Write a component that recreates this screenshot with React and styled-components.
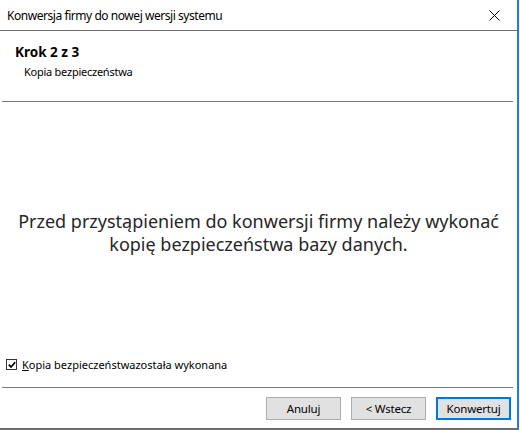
import React, { useState } from "react";
import styled, { createGlobalStyle } from "styled-components";

const GlobalStyle = createGlobalStyle`
  html, body {
    margin: 0;
    padding: 0;
    background: #fff;
  }
  body {
    font-family: "Noto Sans", "Segoe UI", sans-serif;
    font-size: 12px;
    color: #000;
  }
`;

const Window = styled.div`
  width: 517px;
  height: 428px;
  background: #fff;
  border-right: 2px solid #1883d7;
  border-bottom: 2px solid #6d6d6d;
  display: flex;
  flex-direction: column;
  box-sizing: content-box;
`;

const TitleBar = styled.div`
  height: 30px;
  display: flex;
  align-items: center;
  justify-content: space-between;
  padding: 0 0 0 7px;
  border-bottom: 1px solid #6d6d6d;
  flex-shrink: 0;
`;

const Title = styled.span`
  font-size: 12px;
  letter-spacing: -0.45px;
`;

const CloseButton = styled.button`
  width: 46px;
  height: 30px;
  border: none;
  background: transparent;
  display: flex;
  align-items: center;
  justify-content: center;
  padding: 0;
`;

const Separator = styled.div`
  height: 1px;
  margin: 0 4px 0 2px;
  background: #7a7a7a;
  flex-shrink: 0;
`;

const Header = styled.div`
  height: 70px;
  padding: 12px 0 0 15px;
  box-sizing: border-box;
  flex-shrink: 0;
`;

const StepTitle = styled.div`
  font-weight: 700;
  font-size: 13.5px;
  line-height: 18px;
`;

const StepSubtitle = styled.div`
  font-size: 11px;
  line-height: 15px;
  margin: 3px 0 0 9px;
  letter-spacing: -0.25px;
`;

const Body = styled.div`
  flex: 1;
  display: flex;
  flex-direction: column;
`;

const Message = styled.div`
  flex: 1;
  display: flex;
  align-items: center;
  justify-content: center;
  text-align: center;
  font-size: 18px;
  line-height: 23px;
  color: #262626;
  padding-top: 6px;
`;

const CheckRow = styled.label`
  display: flex;
  align-items: center;
  gap: 5px;
  padding: 0 0 15px 6px;
  font-size: 11px;
  cursor: default;
`;

const CheckBox = styled.span`
  width: 9px;
  height: 9px;
  border: 1px solid #333;
  background: #fff;
  display: flex;
  align-items: center;
  justify-content: center;
  box-sizing: content-box;
`;

const Mnemonic = styled.span`
  text-decoration: underline;
`;

const Footer = styled.div`
  height: 40px;
  display: flex;
  align-items: center;
  justify-content: flex-end;
  gap: 10px;
  padding: 0 6px 0 0;
  flex-shrink: 0;
`;

const Button = styled.button`
  width: 75px;
  height: 23px;
  font-family: "Noto Sans", "Segoe UI", sans-serif;
  font-size: 11.5px;
  letter-spacing: -0.2px;
  color: #000;
  background: #e1e1e1;
  border: 1px solid ${({ $primary }) => ($primary ? "#0078d7" : "#adadad")};
  box-shadow: ${({ $primary }) => ($primary ? "inset 0 0 0 1px #0078d7" : "none")};
  padding: 0;
  border-radius: 0;
`;

export default function App() {
  const [done, setDone] = useState(true);

  return (
    <>
      <GlobalStyle />
      <Window>
        <TitleBar>
          <Title>Konwersja firmy do nowej wersji systemu</Title>
          <CloseButton aria-label="Zamknij">
            <svg width="11" height="11" viewBox="0 0 11 11">
              <path d="M0.5 0.5 L10.5 10.5 M10.5 0.5 L0.5 10.5" stroke="#000" strokeWidth="1" />
            </svg>
          </CloseButton>
        </TitleBar>
        <Header>
          <StepTitle>Krok 2 z 3</StepTitle>
          <StepSubtitle>Kopia bezpieczeństwa</StepSubtitle>
        </Header>
        <Separator />
        <Body>
          <Message>
            Przed przystąpieniem do konwersji firmy należy wykonać
            <br />
            kopię bezpieczeństwa bazy danych.
          </Message>
          <CheckRow onClick={() => setDone(!done)}>
            <CheckBox>
              {done && (
                <svg width="8" height="8" viewBox="0 0 8 8">
                  <path d="M0.8 3.6 L3 6 L7.2 1.2" stroke="#000" strokeWidth="1.7" fill="none" />
                </svg>
              )}
            </CheckBox>
            <span>
              <Mnemonic>K</Mnemonic>opia bezpieczeństwazostała wykonana
            </span>
          </CheckRow>
        </Body>
        <Separator />
        <Footer>
          <Button>Anuluj</Button>
          <Button>&lt; Wstecz</Button>
          <Button $primary>Konwertuj</Button>
        </Footer>
      </Window>
    </>
  );
}
